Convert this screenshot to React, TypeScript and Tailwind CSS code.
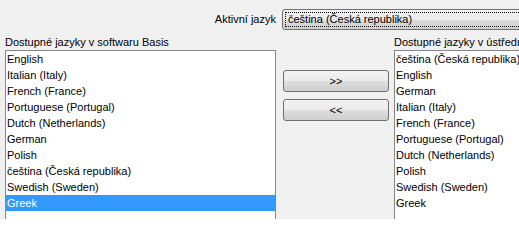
const leftItems = [
  "English",
  "Italian (Italy)",
  "French (France)",
  "Portuguese (Portugal)",
  "Dutch (Netherlands)",
  "German",
  "Polish",
  "čeština (Česká republika)",
  "Swedish (Sweden)",
  "Greek",
];

const rightItems = [
  "čeština (Česká republika)",
  "English",
  "German",
  "Italian (Italy)",
  "French (France)",
  "Portuguese (Portugal)",
  "Dutch (Netherlands)",
  "Polish",
  "Swedish (Sweden)",
  "Greek",
];

const selected = "Greek";

function WinButton({ label }: { label: string }) {
  return (
    <button className="h-[22px] w-[106px] rounded-[3px] border border-[#707070] bg-[linear-gradient(#f2f2f2_0%,#ebebeb_50%,#dddddd_51%,#cfcfcf_100%)] text-[11px] leading-none text-black">
      {label}
    </button>
  );
}

function ListBox({ items, highlight }: { items: string[]; highlight?: string }) {
  return (
    <div className="h-[190px] border border-[#828790] bg-white">
      {items.map((item) => (
        <div
          key={item}
          className={
            item === highlight
              ? "h-4 pl-[1px] leading-4 bg-[#3399ff] text-white"
              : "h-4 pl-[1px] leading-4 text-black"
          }
        >
          {item}
        </div>
      ))}
    </div>
  );
}

export default function App() {
  return (
    <div className="h-[219px] w-[519px] overflow-hidden bg-[#f0f0f0] font-['Liberation_Sans',Tahoma,sans-serif] text-[11px] text-black">
      {/* Active language */}
      <div className="flex items-center pt-[9px]">
        <div className="w-[277px] shrink-0 pr-[1px] text-right">Aktivní jazyk</div>
        <div className="ml-[5px] h-[21px] w-[300px] shrink-0 rounded-[3px] border border-[#707070] bg-[linear-gradient(#f2f2f2_0%,#ebebeb_50%,#dddddd_51%,#cfcfcf_100%)] p-[2px]">
          <div className="h-[15px] border border-dotted border-black pl-[2px] leading-[13px]">
            čeština (Česká republika)
          </div>
        </div>
      </div>

      <div className="mt-[6px] flex pl-[5px]">
        {/* Software languages */}
        <div className="w-[271px] shrink-0">
          <div className="h-[14px] leading-[13px]">Dostupné jazyky v softwaru Basis</div>
          <ListBox items={leftItems} highlight={selected} />
        </div>

        {/* Move buttons */}
        <div className="ml-[7px] flex shrink-0 flex-col gap-[7px] pt-[34px]">
          <WinButton label=">>" />
          <WinButton label="<<" />
        </div>

        {/* Central languages */}
        <div className="ml-[5px] w-[200px] shrink-0">
          <div className="h-[14px] whitespace-nowrap leading-[13px]">Dostupné jazyky v ústředně</div>
          <ListBox items={rightItems} />
        </div>
      </div>
    </div>
  );
}
